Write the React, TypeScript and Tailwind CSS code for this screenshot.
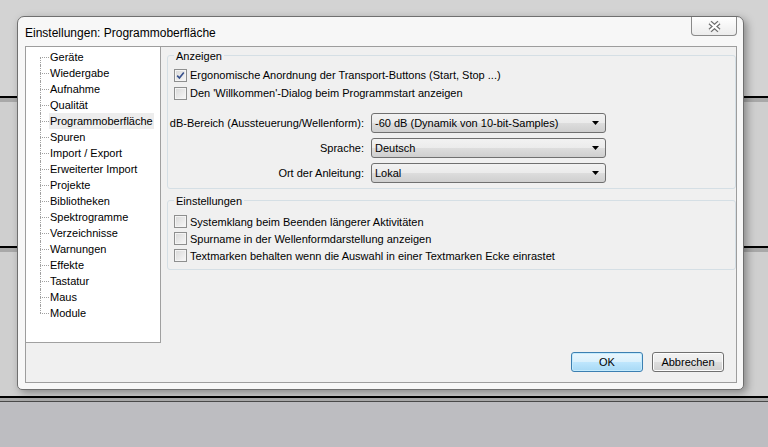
import React from "react";

const treeItems = [
  "Geräte",
  "Wiedergabe",
  "Aufnahme",
  "Qualität",
  "Programmoberfläche",
  "Spuren",
  "Import / Export",
  "Erweiterter Import",
  "Projekte",
  "Bibliotheken",
  "Spektrogramme",
  "Verzeichnisse",
  "Warnungen",
  "Effekte",
  "Tastatur",
  "Maus",
  "Module",
];

const Check = ({ checked }: { checked?: boolean }) => (
  <span className="flex h-[13px] w-[13px] shrink-0 items-center justify-center border border-[#8e8f8f] bg-[linear-gradient(135deg,#d8d8d8,#f8f8f8)] shadow-[inset_0_0_0_1px_#f4f4f4]">
    {checked && (
      <svg width="9" height="9" viewBox="0 0 9 9">
        <path d="M1.2 4.6 L3.4 7 L7.8 1.4" fill="none" stroke="#37508c" strokeWidth="1.6" />
      </svg>
    )}
  </span>
);

const Select = ({ value }: { value: string }) => (
  <div className="flex h-[20px] items-center justify-between rounded-[3px] border border-[#707070] bg-[linear-gradient(#f2f2f2,#ebebeb_50%,#dddddd_51%,#cfcfcf)] pl-[3px] pr-[6px]">
    <span>{value}</span>
    <svg width="7" height="4" viewBox="0 0 7 4">
      <polygon points="0,0 7,0 3.5,4" fill="#000" />
    </svg>
  </div>
);

const App = () => {
  return (
    <div className="relative h-[447px] w-[768px] overflow-hidden font-['Liberation_Sans',Arial,sans-serif] text-[11px] leading-[14px] text-black">
      {/* app window behind the dialog */}
      <div className="flex h-full flex-col">
        <div className="h-[96px] bg-[#d3d3d3]" />
        <div className="h-[2px] bg-black" />
        <div className="h-[4px] bg-[#a8a8a8]" />
        <div className="h-[144px] bg-[#cfcfcf]" />
        <div className="h-[2px] bg-black" />
        <div className="h-[4px] bg-[#a8a8a8]" />
        <div className="h-[144px] bg-[#cfcfcf]" />
        <div className="h-[2px] bg-black" />
        <div className="h-[3px] bg-[#a9a9a9]" />
        <div className="h-[1px] bg-[#4a4a4a]" />
        <div className="flex-1 bg-[#bdbdc1]" />
      </div>

      {/* dialog */}
      <div className="absolute left-[17px] top-[16px] flex h-[374px] w-[727px] flex-col rounded-t-[7px] rounded-b-[5px] border border-[#6f6f6f] bg-[#f7f7f7] pl-[7px] pr-[6px] shadow-[3px_3px_8px_rgba(0,0,0,0.35)]">
        {/* title */}
        <div className="flex h-[29px] items-start justify-between">
          <span className="pt-[8px] text-[12px] leading-[16px]">Einstellungen: Programmoberfläche</span>
          <button className="flex h-[19px] w-[46px] items-center justify-center rounded-b-[4px] border border-t-0 border-[#8a8a8a] bg-[linear-gradient(#ffffff,#ececec)]">
            <svg width="15" height="13" viewBox="0 0 15 13">
              <path d="M3 2.5 L12 10.5 M12 2.5 L3 10.5" stroke="#6e6e6e" strokeWidth="4.4" />
              <path d="M3 2.5 L12 10.5 M12 2.5 L3 10.5" stroke="#ffffff" strokeWidth="2.2" />
            </svg>
          </button>
        </div>

        {/* client area */}
        <div className="flex h-[337px] flex-col border border-[#9d9d9d] bg-[#f0f0f0]">
          <div className="flex">
            {/* tree */}
            <div className="flex h-[296px] w-[135px] flex-col border-r border-b border-[#a0a0a0] bg-white pl-[14px] pt-[2px]">
              {treeItems.map((item, i) => (
                <div key={item} className="flex h-[16px] items-center">
                  <span className="flex h-full w-[9px] flex-col">
                    <span
                      className={
                        i === 0
                          ? "h-[8px]"
                          : "h-[8px] border-l border-dotted border-[#a0a0a0]"
                      }
                    />
                    <span
                      className={
                        i === treeItems.length - 1
                          ? "h-[8px] border-t border-dotted border-[#a0a0a0]"
                          : "h-[8px] border-t border-l border-dotted border-[#a0a0a0]"
                      }
                    />
                  </span>
                  <span
                    className={
                      item === "Programmoberfläche"
                        ? "flex h-full items-center bg-[#ededed] px-[1px]"
                        : "flex h-full items-center px-[1px]"
                    }
                  >
                    {item}
                  </span>
                </div>
              ))}
            </div>

            {/* settings */}
            <div className="flex flex-1 flex-col pl-[6px]">
              <fieldset className="rounded-[3px] border border-[#d5dfe5]">
                <legend className="ml-[6px] px-[2px] pt-[2px] leading-[14px]">Anzeigen</legend>
                <div className="flex flex-col pl-[6px] pt-[3px] pb-[5px]">
                  <label className="flex h-[18px] items-center gap-[3px]">
                    <Check checked />
                    Ergonomische Anordnung der Transport-Buttons (Start, Stop ...)
                  </label>
                  <label className="flex h-[18px] items-center gap-[3px]">
                    <Check />
                    Den 'Willkommen'-Dialog beim Programmstart anzeigen
                  </label>
                  <div className="mt-[11px] grid grid-cols-[190px_235px] items-center gap-x-[7px] gap-y-[5px]">
                    <span className="flex justify-end whitespace-nowrap">dB-Bereich (Aussteuerung/Wellenform):</span>
                    <Select value="-60 dB (Dynamik von 10-bit-Samples)" />
                    <span className="flex justify-end whitespace-nowrap">Sprache:</span>
                    <Select value="Deutsch" />
                    <span className="flex justify-end whitespace-nowrap">Ort der Anleitung:</span>
                    <Select value="Lokal" />
                  </div>
                </div>
              </fieldset>

              <fieldset className="mt-[3px] rounded-[3px] border border-[#d5dfe5]">
                <legend className="ml-[6px] px-[2px] pt-[2px] leading-[14px]">Einstellungen</legend>
                <div className="flex flex-col pl-[6px] pt-[5px] pb-[5px]">
                  <label className="flex h-[17px] items-center gap-[3px]">
                    <Check />
                    Systemklang beim Beenden längerer Aktivitäten
                  </label>
                  <label className="flex h-[17px] items-center gap-[3px]">
                    <Check />
                    Spurname in der Wellenformdarstellung anzeigen
                  </label>
                  <label className="flex h-[17px] items-center gap-[3px]">
                    <Check />
                    Textmarken behalten wenn die Auswahl in einer Textmarken Ecke einrastet
                  </label>
                </div>
              </fieldset>
            </div>
          </div>

          {/* buttons */}
          <div className="mt-auto flex justify-end gap-[9px] pr-[12px] pb-[10px]">
            <button className="h-[20px] w-[72px] rounded-[3px] border border-[#3c7fb1] bg-[linear-gradient(#eaf6fd,#d9f0fc_50%,#bee6fd_51%,#a7d9f5)] shadow-[inset_0_0_0_1px_#c4ebfd]">
              OK
            </button>
            <button className="h-[20px] w-[72px] rounded-[3px] border border-[#707070] bg-[linear-gradient(#f2f2f2,#ebebeb_50%,#dddddd_51%,#cfcfcf)] shadow-[inset_0_0_0_1px_#fcfcfc]">
              Abbrechen
            </button>
          </div>
        </div>
      </div>
    </div>
  );
};

export default App;
